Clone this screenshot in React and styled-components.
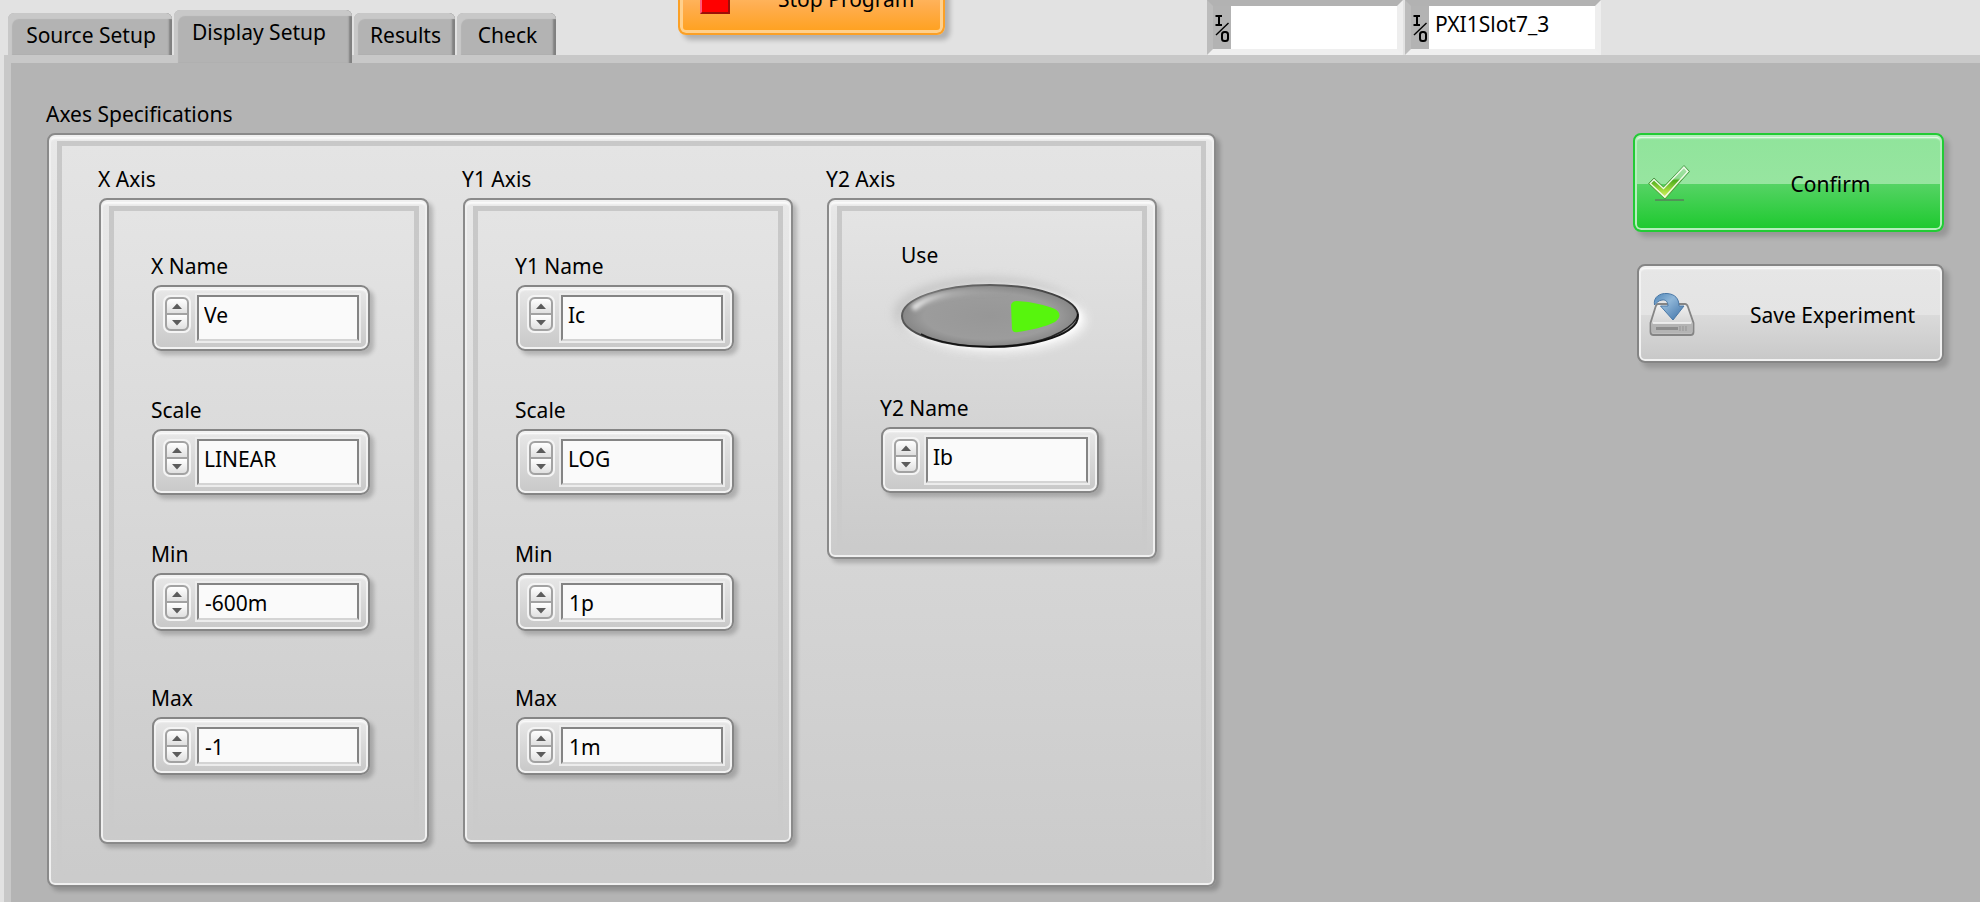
import React, { useId, useState } from "react";
import styled, { createGlobalStyle } from "styled-components";

const Global = createGlobalStyle`
  *, *::before, *::after { box-sizing: border-box; }
  html, body, #root { height: 100%; }
  body { margin: 0; background: #e2e2e2; overflow: hidden; }
  body, button, input { font-family: "Noto Sans", "Open Sans", sans-serif; font-size: 21px; line-height: 30px; color: #000; }
  button { cursor: pointer; }
`;

const Page = styled.div`
  min-height: 100%;
  display: flex;
  flex-direction: column;
`;

const TopBar = styled.header`
  height: 55px;
  display: flex;
  align-items: flex-start;
  padding-left: 8px;
`;

const Tabs = styled.nav`
  display: flex;
  align-items: flex-end;
  height: 55px;
  gap: 2px;
`;

const Tab = styled.button`
  position: relative;
  width: ${(p) => p.$width}px;
  height: ${(p) => (p.$active ? 53 : 42)}px;
  margin-bottom: ${(p) => (p.$active ? -8 : 0)}px;
  padding: ${(p) => (p.$active ? "0 8px 10px 0" : "2px 0 0 2px")};
  border: 0;
  border-radius: 6px 6px 0 0;
  background: #b3b3b3;
  box-shadow: inset 5px 7px 1px -1px #c8c8c8, inset -4px 0 2px -1px #808080;
  white-space: nowrap;
`;

const StopButton = styled.button`
  display: flex;
  align-items: center;
  width: 267px;
  height: 72px;
  margin: -37px 0 0 122px;
  padding: 0 0 0 20px;
  gap: 48px;
  border: 2px solid #fba026;
  border-radius: 8px;
  background: linear-gradient(#ffd09a, #ffae50 60%, #ffa01c);
  box-shadow: inset 0 0 0 3px #ffd08c, 5px 5px 5px rgba(0, 0, 0, 0.22);
  white-space: nowrap;
`;

const StopMark = styled.span`
  width: 30px;
  height: 30px;
  background: #f00;
  border: 2px solid #9c1008;
  border-left-color: #ff5a78;
`;

const Resources = styled.div`
  display: flex;
  gap: 2px;
  margin-left: 262px;
`;

const IoFrame = styled.label`
  display: flex;
  width: 196px;
  height: 55px;
  border: 6px solid;
  border-color: #b2b2b2 #eeeeee #efefef #bcbcbc;
  background: #b3b3b3;
`;

const IoInput = styled.input`
  flex: 1;
  min-width: 0;
  border: 0;
  padding: 0 6px 8px;
  background: #fff;
  outline: 0;
`;

const Panel = styled.main`
  flex: 1;
  display: flex;
  justify-content: space-between;
  align-items: flex-start;
  margin-left: 4px;
  padding: 36px 36px 12px 36px;
  border: 0 solid #c8c8c8;
  border-top-width: 8px;
  border-left-width: 7px;
  background: #b4b4b4;
`;

const Group = styled.section`
  display: flex;
  flex-direction: column;
`;

const Caption = styled.h2`
  margin: 0 0 4px -1px;
  font-size: 21px;
  line-height: 30px;
  font-weight: 400;
`;

const Frame = styled.div`
  padding: 6px 8px;
  border: 2px solid #8a8a8a;
  border-radius: 8px;
  background: linear-gradient(#e8e8e8, #cbcbcb);
  box-shadow: inset 0 0 0 2px #f0f0f0, inset 0 4px 2px #fbfbfb,
    4px 4px 4px rgba(0, 0, 0, 0.2);
`;

const Well = styled.div`
  border: 5px solid transparent;
  padding: ${(p) => p.$pad};
  background: linear-gradient(#e4e4e4, #cbcbcb) padding-box,
    linear-gradient(#c8c8c8, #cbcbcb) border-box;
`;

const Columns = styled.div`
  display: flex;
  align-items: flex-start;
  gap: 34px;
`;

const Fields = styled.div`
  display: grid;
  grid-auto-rows: 144px;
  width: 218px;
`;

const FieldBox = styled.div`
  display: flex;
  flex-direction: column;
  align-items: flex-start;
  gap: 4px;
`;

const FieldLabel = styled.label`
  margin-left: -1px;
`;

const Control = styled.div`
  display: flex;
  align-items: flex-start;
  gap: 6px;
  width: 218px;
  padding: 8px 9px;
  border: 2px solid #858585;
  border-radius: 9px;
  background: linear-gradient(#e8e8e8, #c8c8c8);
  box-shadow: inset 0 0 0 2px #f2f2f2, inset 0 3px 2px #fff,
    4px 4px 4px rgba(0, 0, 0, 0.2);
`;

const Spinner = styled.div`
  display: grid;
  grid-template-rows: 1fr 1fr;
  width: 28px;
  height: 38px;
  border: 2px solid #f4f4f4;
  border-radius: 7px;
`;

const SpinButton = styled.button`
  display: grid;
  place-items: center;
  padding: 0;
  border: 2px solid #a2a2a2;
  border-top-width: ${(p) => (p.$down ? 1 : 2)}px;
  border-bottom-width: ${(p) => (p.$down ? 2 : 1)}px;
  border-radius: ${(p) => (p.$down ? "0 0 6px 6px" : "6px 6px 0 0")};
  background: linear-gradient(#fff, #e0e0e0);
`;

const ValueInput = styled.input`
  flex: 1;
  min-width: 0;
  height: ${(p) => (p.$tall ? 46 : 37)}px;
  padding: ${(p) => (p.$tall ? "0 5px 6px" : "2px 6px 0")};
  border: 2px solid #848484;
  border-bottom-color: #d4d4d4;
  background: #fafafa;
  box-shadow: 0 0 0 2px #ececec;
  outline: 0;
`;

const ToggleField = styled.label`
  display: flex;
  flex-direction: column;
  gap: 14px;
  width: 178px;
  margin: 0 0 45px 20px;
  position: relative;
  cursor: pointer;
`;

const ToggleInput = styled.input`
  position: absolute;
  inset: 44px 0 0;
  width: 178px;
  height: 64px;
  margin: 0;
  opacity: 0;
`;

const ToggleArt = styled.svg`
  display: block;
  overflow: visible;
`;

const Actions = styled.div`
  display: flex;
  flex-direction: column;
  align-items: flex-end;
  gap: 32px;
  padding-top: 34px;
`;

const ActionButton = styled.button`
  display: flex;
  align-items: center;
  width: ${(p) => (p.$primary ? 311 : 307)}px;
  height: 99px;
  padding: 0 0 0 ${(p) => (p.$primary ? 12 : 10)}px;
  border: 2px solid ${(p) => (p.$primary ? "#22cb35" : "#858585")};
  border-radius: 8px;
  background: ${(p) =>
    p.$primary
      ? "linear-gradient(#90e49b, #97e5a0 52%, #55d364 52%, #1cc92d)"
      : "linear-gradient(#e6e6e6, #e4e4e4 52%, #dadada 52%, #c8c8c8)"};
  box-shadow: inset 0 0 0 2px ${(p) => (p.$primary ? "#b5efbc" : "#f2f2f2")},
    inset 0 3px 2px #fff, 5px 5px 5px rgba(0, 0, 0, 0.16);
`;

const ActionText = styled.span`
  flex: 1;
  padding: 2px 0 0 28px;
  text-align: center;
  white-space: nowrap;
`;

function Arrow({ down }) {
  return (
    <svg width="12" height="7" viewBox="0 0 12 7" aria-hidden="true">
      <path d={down ? "M1 1h10L6 6.5z" : "M1 6h10L6 .5z"} fill="#5c5c5c" />
    </svg>
  );
}

function IoMark() {
  return (
    <svg width="18" height="43" viewBox="0 0 18 43" fill="none" stroke="#000" strokeWidth="2" aria-hidden="true">
      <path d="M2.500 10h6.500M6 10v9M2.500 19h6.500" />
      <path d="M3 29L15.500 17" strokeWidth="1.400" />
      <rect x="9" y="26" width="6" height="9" rx="2.500" />
    </svg>
  );
}

function CheckIcon() {
  return (
    <svg width="44" height="38" viewBox="0 0 44 38" aria-hidden="true">
      <defs>
        <linearGradient id="chk" x1="0" y1="0" x2="0" y2="1">
          <stop offset="0" stopColor="#a9e4ac" />
          <stop offset=".38" stopColor="#8fdb90" />
          <stop offset=".45" stopColor="#4fae1e" />
          <stop offset=".75" stopColor="#a5dc3c" />
          <stop offset="1" stopColor="#e2f579" />
        </linearGradient>
      </defs>
      <path d="M8 36h29" stroke="#56805a" strokeWidth="2" opacity=".75" />
      <path d="M1.500 19.500L7 14l9.500 9L37 1.500l5.500 6L18 35z" fill="url(#chk)" stroke="#4c9a48" strokeWidth="1" />
      <path d="M3.300 19.400L7 15.700l9.500 9L36.900 3.300l3.800 4.200L17.800 33z" fill="none" stroke="#effbe8" strokeWidth="1.300" />
    </svg>
  );
}

function SaveIcon() {
  return (
    <svg width="46" height="44" viewBox="0 0 46 44" aria-hidden="true">
      <defs>
        <linearGradient id="drv" x1="0" y1="0" x2="0" y2="1">
          <stop offset="0" stopColor="#f2f2f2" />
          <stop offset="1" stopColor="#c4c4c4" />
        </linearGradient>
        <linearGradient id="arr" x1="0" y1="0" x2="1" y2="1">
          <stop offset="0" stopColor="#4f86b8" />
          <stop offset=".4" stopColor="#8fb6d8" />
          <stop offset="1" stopColor="#3a6ea5" />
        </linearGradient>
      </defs>
      <path d="M9 12h27q2 0 3 3l5.500 16v9q0 3-3 3H4.500q-3 0-3-3v-9L6.500 15q1-3 2.500-3z" fill="url(#drv)" stroke="#858585" strokeWidth="1.800" />
      <path d="M3 31.500h40v8q0 2-2 2H5q-2 0-2-2z" fill="#b4b4b4" />
      <path d="M4 31h38" stroke="#f4f4f4" strokeWidth="1.300" />
      <path d="M7 36.500h22" stroke="#8c8c8c" strokeWidth="3" />
      <path d="M31 34v5M34 34v5M37 34v5" stroke="#959595" strokeWidth="1" />
      <path d="M5.500 13C4 5 11 1 18 1.500c8 .6 12 5 12 12.500h5L24 28 11.500 14H19c0-4-2-6.500-6-6-3.500.4-5 2.500-7.500 5z" fill="url(#arr)" stroke="#4a78a6" strokeWidth="1" />
    </svg>
  );
}

function Field({ label, value, tall }) {
  const id = useId();
  return (
    <FieldBox>
      <FieldLabel htmlFor={id}>{label}</FieldLabel>
      <Control>
        <Spinner>
          <SpinButton type="button" aria-label={`Increment ${label}`}><Arrow /></SpinButton>
          <SpinButton type="button" $down aria-label={`Decrement ${label}`}><Arrow down /></SpinButton>
        </Spinner>
        <ValueInput id={id} defaultValue={value} $tall={tall} />
      </Control>
    </FieldBox>
  );
}

function Toggle({ label }) {
  const [on, setOn] = useState(true);
  return (
    <ToggleField>
      {label}
      <ToggleInput type="checkbox" checked={on} onChange={(e) => setOn(e.target.checked)} />
      <ToggleArt width="178" height="64" viewBox="0 0 178 64" aria-hidden="true">
        <defs>
          <radialGradient id="face" cx=".5" cy=".5" r=".5">
            <stop offset="0" stopColor="#979797" />
            <stop offset=".75" stopColor="#9c9c9c" />
            <stop offset="1" stopColor="#868686" />
          </radialGradient>
          <linearGradient id="rim" x1="0" y1="0" x2="1" y2="1">
            <stop offset="0" stopColor="#707070" />
            <stop offset=".45" stopColor="#4a4a4a" />
            <stop offset="1" stopColor="#000" />
          </linearGradient>
          <linearGradient id="shine" x1="0" y1="0" x2="1" y2="0">
            <stop offset="0" stopColor="#ececec" />
            <stop offset=".4" stopColor="#b8b8b8" stopOpacity=".7" />
            <stop offset="1" stopColor="#999" stopOpacity="0" />
          </linearGradient>
          <filter id="soft" x="-30%" y="-50%" width="160%" height="200%">
            <feGaussianBlur stdDeviation="5" />
          </filter>
          <filter id="soft2" x="-20%" y="-50%" width="140%" height="200%">
            <feGaussianBlur stdDeviation="2" />
          </filter>
        </defs>
        <ellipse cx="85" cy="29" rx="92" ry="36" fill="#bdbdbd" opacity=".7" filter="url(#soft)" />
        <ellipse cx="94" cy="36" rx="91" ry="33" fill="#fff" opacity=".8" filter="url(#soft)" />
        <ellipse cx="92" cy="33" rx="88" ry="31" fill="#fff" filter="url(#soft2)" />
        <ellipse cx="89" cy="32" rx="88" ry="31" fill="url(#face)" stroke="url(#rim)" strokeWidth="2" />
        <path d="M20 50C50 66 125 68 160 48C170 42 176 36 177 30" fill="none" stroke="#0a0a0a" strokeWidth="1.500" opacity=".8" />
        <path d="M12 25C28 9 65 6 110 6" fill="none" stroke="url(#shine)" strokeWidth="6" filter="url(#soft2)" />
        {on && (
          <path d="M110 21q1-4 6-4c16 1 28 4 38 8q9 6 0 13c-10 5-24 8-37 10q-5 1-6-3z" fill="#57f50d" />
        )}
      </ToggleArt>
    </ToggleField>
  );
}

function AxisGroup({ title, pad, children }) {
  return (
    <Group>
      <Caption>{title}</Caption>
      <Frame>
        <Well $pad={pad}>{children}</Well>
      </Frame>
    </Group>
  );
}

export default function App() {
  return (
    <>
      <Global />
      <Page>
        <TopBar>
          <Tabs>
            <Tab type="button" $width={164}>Source Setup</Tab>
            <Tab type="button" $width={178} $active>Display Setup</Tab>
            <Tab type="button" $width={101}>Results</Tab>
            <Tab type="button" $width={99}>Check</Tab>
          </Tabs>
          <StopButton type="button">
            <StopMark />
            Stop Program
          </StopButton>
          <Resources>
            <IoFrame>
              <IoMark />
              <IoInput aria-label="First resource" />
            </IoFrame>
            <IoFrame>
              <IoMark />
              <IoInput aria-label="Second resource" defaultValue="PXI1Slot7_3" />
            </IoFrame>
          </Resources>
        </TopBar>
        <Panel>
          <Group>
            <Caption>Axes Specifications</Caption>
            <Frame>
              <Well $pad="18px 44px 30px 37px">
                <Columns>
                  <AxisGroup title="X Axis" pad="40px 44px 4px 38px">
                    <Fields>
                      <Field label="X Name" value="Ve" tall />
                      <Field label="Scale" value="LINEAR" tall />
                      <Field label="Min" value="-600m" />
                      <Field label="Max" value="-1" />
                    </Fields>
                  </AxisGroup>
                  <AxisGroup title="Y1 Axis" pad="40px 44px 4px 38px">
                    <Fields>
                      <Field label="Y1 Name" value="Ic" tall />
                      <Field label="Scale" value="LOG" tall />
                      <Field label="Min" value="1p" />
                      <Field label="Max" value="1m" />
                    </Fields>
                  </AxisGroup>
                  <AxisGroup title="Y2 Axis" pad="29px 43px 53px 39px">
                    <Toggle label="Use" />
                    <Field label="Y2 Name" value="Ib" tall />
                  </AxisGroup>
                </Columns>
              </Well>
            </Frame>
          </Group>
          <Actions>
            <ActionButton type="button" $primary>
              <CheckIcon />
              <ActionText>Confirm</ActionText>
            </ActionButton>
            <ActionButton type="button">
              <SaveIcon />
              <ActionText>Save Experiment</ActionText>
            </ActionButton>
          </Actions>
        </Panel>
      </Page>
    </>
  );
}
